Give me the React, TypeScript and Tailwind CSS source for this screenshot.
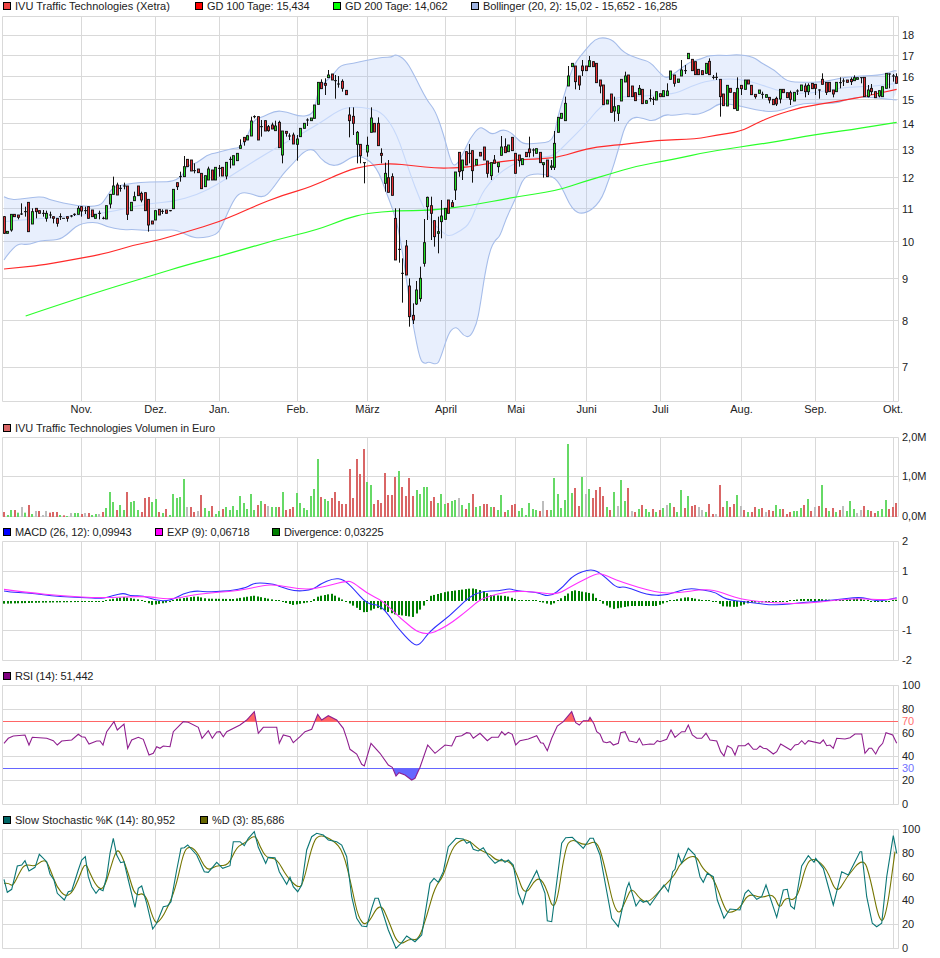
import React from "react";

// all series are stored in 3x crop coordinates, the way they were read off the chart
type Candle = [number, string, number, number, number?, number?];

const CANDLES_A: Candle[] = [
  [12,"r",650,700,648,702],[22,"g",694,700],[33,"g",643,690,643,695],[43,"r",643,650],[54,"r",645,652,645,658],[65,"k",642,643,610,645],[76,"k",635,635,620,650],[85,"r",607,695],[97,"g",635,672,625,672],[108,"r",625,635,625,655],[118,"r",632,640],[129,"k",640,640,630,650],[139,"g",640,655,632,665],[150,"k",645,645,635,655],[160,"r",650,655,650,670],[171,"r",655,670,655,680],[181,"k",650,650,640,660],[191,"k",655,655,655,655],[202,"r",650,655,650,665],[213,"k",648,648,645,652],[223,"k",643,643,640,648],[235,"g",625,643,618,643],[244,"r",620,633,618,650],[255,"k",632,632,620,642],[265,"r",620,655],[277,"r",630,650],[287,"g",643,655],[298,"k",640,640,632,658],[309,"k",655,655,650,658],[319,"g",617,657],
  [331,"g",583,612,583,625],[340,"g",558,583,530,583],[352,"r",555,585,548,585],[362,"k",565,565,555,575],[373,"k",558,558,548,568],[382,"r",558,643,558,660],[394,"g",607,632],[404,"g",590,602,575,602],[415,"r",558,587],[425,"r",580,600,575,607],[436,"r",578,632],[446,"r",598,675,598,695],[457,"r",663,672],[467,"g",632,660],[478,"r",628,645],[488,"k",634,634,628,642],[498,"r",630,640],[510,"k",632,632,630,634],[520,"g",568,626],[531,"r",548,560,548,570],[541,"k",530,530,515,545],[552,"g",500,530,468,530],[562,"r",478,500],[573,"r",480,513],[584,"k",512,512,490,520],[595,"r",507,518],[605,"r",520,566],[616,"g",527,560],[625,"g",507,540,500,540],[637,"r",510,540],[647,"g",502,540],
  [658,"k",505,505,495,530],[668,"r",502,528],[679,"g",487,528,487,538],[690,"k",478,478,470,505],[700,"g",467,495],[712,"g",460,482],[721,"g",437,445,418,445],[733,"r",412,425,412,437],[742,"g",407,420],[754,"g",363,408,350,408],[764,"k",350,350,346,355],[775,"r",350,420],[785,"k",380,380,360,410],[796,"r",362,393],[806,"r",380,392,375,395],[817,"r",375,387,368,387],[827,"g",378,392,362,392],[838,"r",367,443,362,443],[848,"g",393,465,393,490],[859,"r",394,400,394,410],[869,"k",408,408,400,420],[880,"r",405,432,398,432],[892,"g",417,433,405,482],[901,"g",385,410],[913,"g",370,385],[923,"k",360,360,355,378],[933,"g",354,362],[943,"g",315,355],[955,"g",247,313],[964,"r",247,266,238,266],[975,"r",250,256,235,285],[985,"g",225,233,210,233],
  [996,"r",222,240],[1006,"k",242,242,225,296],[1016,"k",252,252,228,263],[1027,"r",244,265,238,275],[1039,"r",271,284],[1048,"r",345,362,322,412],[1060,"r",349,370,322,405],[1071,"g",397,433,393,490],[1081,"r",433,467,433,490],[1093,"k",488,488,488,550],[1102,"g",436,456,410,470],[1114,"g",354,397,322,397],[1124,"r",370,396],[1134,"r",370,437,352,437],[1144,"r",460,466,445,490],[1156,"g",520,550,488,575],[1165,"r",533,577,480,577],[1177,"r",530,586,520,586],[1187,"r",655,780,625,780],[1198,"k",748,748,625,788],[1208,"k",820,820,775,908],[1219,"r",738,825,720,825],[1229,"r",858,950,835,980],[1240,"r",946,960,910,972],[1250,"g",870,912,843,915],[1261,"g",835,896,800,905],[1273,"g",728,790,657,800],[1283,"g",592,620,590,660],[1293,"r",617,640,590,720],[1304,"r",662,710,662,740],[1315,"g",695,700,650,760],[1325,"g",648,665,600,715],[1335,"g",625,658],[1345,"r",600,640],[1357,"r",608,620,600,620],[1366,"g",516,570,516,600],[1377,"r",457,515,457,530],[1387,"g",480,512,480,540],[1398,"r",455,495],[1408,"k",460,460,432,490],
];

// second half, x counted from the middle of the chart
const CANDLES_B: Candle[] = [
  [6,"r",452,512,452,548],[18,"g",478,495],[30,"r",457,468],[42,"r",441,480],[52,"r",483,520,483,533],[63,"g",488,527,488,540],[74,"r",480,490,465,490],[84,"g",488,500,488,518],[94,"g",441,466,408,466],[106,"r",440,458,415,458],[116,"g",435,455],[127,"r",412,452],[137,"r",460,520],[148,"r",465,482,465,500],[158,"g",476,494],[168,"r",457,470],[179,"r",447,458,410,472],[190,"k",450,450,445,470],[200,"g",446,460],[211,"r",457,488],[221,"g",488,494,488,533],[232,"r",480,530],[243,"g",498,502,480,510],[253,"g",430,502,393,510],[264,"g",352,397],[274,"g",340,355],[285,"g",310,362,290,362],[295,"g",228,258,198,258],[306,"g",190,200],[317,"r",198,245,198,268],
  [327,"r",228,255,228,270],[338,"r",198,212,180,228],[349,"r",198,212],[359,"g",182,200,168,200],[370,"r",185,200],[380,"r",190,248],[391,"r",240,258,240,280],[401,"r",255,314],[412,"g",300,312],[423,"r",282,337],[433,"g",320,333,290,365],[445,"g",317,340,317,363],[455,"g",238,303],[465,"g",228,246,215,246],[475,"r",225,290],[487,"r",258,290],[497,"r",278,302],[508,"g",265,284,255,284],[518,"r",268,311],[530,"g",302,310],[540,"k",296,296,268,305],[550,"k",298,298,290,315],[560,"g",275,300],[570,"r",281,290],[581,"g",272,290],[592,"g",273,287,250,287],[601,"g",213,238],[613,"r",225,250,225,260],[624,"g",237,247],[634,"g",210,228,180,228],
  [645,"k",212,212,195,222],[655,"g",160,176],[667,"r",178,212],[676,"r",185,224],[686,"r",208,224],[697,"r",212,224],[709,"g",190,220],[719,"r",184,224,175,224],[730,"k",232,232,225,238],[740,"k",232,232,218,240],[751,"r",238,290,238,350],[760,"r",282,317],[771,"g",256,318],[781,"r",265,277],[792,"r",278,326],[802,"g",265,331,232,331],[813,"r",256,266,256,285],[825,"g",240,268],[835,"r",240,252],[845,"r",256,284],[856,"r",283,290,283,296],[867,"g",270,280],[877,"k",283,283,275,296],[888,"g",284,292],[898,"r",292,300,292,310],[909,"r",298,314],[920,"r",295,312,290,318],[930,"g",268,297,268,310],[940,"r",268,278],[951,"r",278,293],
  [962,"r",278,298,272,315],[973,"g",277,303],[983,"k",273,273,268,285],[994,"g",255,272],[1005,"r",258,275,250,292],[1015,"g",256,275,250,285],[1027,"r",250,266],[1037,"r",253,265,253,285],[1047,"k",270,270,268,296],[1058,"r",238,253,220,253],[1069,"r",247,277,247,285],[1079,"r",247,275],[1090,"r",270,282,270,292],[1100,"g",247,275],[1111,"k",248,248,232,265],[1121,"k",243,243,235,258],[1132,"r",240,247],[1143,"r",238,245,232,255],[1153,"g",233,242,226,242],[1163,"g",233,238],[1174,"k",233,233,232,250],[1184,"r",232,290],[1195,"g",270,290,255,292],[1205,"r",265,275,252,285],[1216,"r",275,293],[1227,"g",272,288,272,292],[1237,"g",260,290],[1248,"g",220,265],[1258,"k",222,222,220,265],[1269,"k",228,228,222,245],[1279,"r",230,250,220,250],
];

const BAND_UP = [12,590,30,600,60,597,100,592,130,590,150,600,230,618,300,620,320,590,340,560,380,553,420,547,480,545,520,545,550,525,560,497,590,490,620,465,650,458,700,445,720,443,745,405,760,360,790,350,825,332,860,335,900,350,935,345,945,320,955,270,975,245,1000,225,1020,195,1060,190,1100,180,1150,172,1175,172,1187,162,1215,178,1240,220,1280,300,1305,330,1330,400,1355,495,1370,495,1390,460,1410,415,
  1438,380,1455,388,1478,405,1505,388,1530,395,1545,410,1570,433,1610,430,1660,425,1672,355,1700,260,1720,195,1760,145,1785,118,1810,112,1840,120,1870,158,1920,178,1950,185,1980,220,2000,237,2030,215,2070,185,2100,178,2130,165,2190,167,2210,163,2260,170,2285,190,2325,210,2360,245,2410,247,2470,247,2530,232,2580,228,2650,225,2680,212,2690,213];
const BAND_LOW = [12,780,25,760,55,730,85,735,120,722,175,720,200,705,235,672,290,665,320,680,365,690,400,688,440,692,500,690,530,690,570,710,600,715,650,705,665,680,700,600,720,578,745,578,790,595,815,570,850,520,880,490,910,455,940,445,960,475,990,497,1020,495,1060,467,1090,470,1130,500,1160,580,1190,660,1210,770,1225,880,1240,980,1260,1080,1275,1092,1285,1085,1310,1094,1320,1080,1345,1000,1362,982,1375,985,1390,1007,1410,1012,
  1430,972,1440,920,1455,820,1470,750,1485,720,1500,710,1520,650,1550,590,1570,530,1610,520,1660,528,1685,560,1715,628,1750,645,1800,610,1830,530,1855,450,1875,375,1900,350,1930,355,1960,365,1995,343,2020,347,2060,340,2090,345,2130,330,2160,307,2220,318,2270,330,2325,337,2370,322,2410,310,2460,310,2510,310,2540,298,2585,290,2640,295,2690,300];
const BAND_MID = [12,665,60,660,130,655,240,645,310,640,380,625,450,610,520,605,590,585,650,555,720,510,800,460,870,420,960,370,1020,328,1060,320,1110,325,1150,340,1190,400,1230,520,1260,600,1290,660,1330,700,1350,710,1385,690,1410,670,
  1440,590,1470,545,1510,510,1545,490,1610,470,1660,470,1700,430,1760,370,1800,320,1850,290,1910,290,1970,285,2030,280,2070,260,2130,240,2210,235,2270,250,2330,270,2370,280,2430,280,2490,270,2550,260,2610,260,2690,250];
const MA_100 = [12,807,80,800,130,795,240,775,320,760,400,735,480,720,560,695,660,665,760,620,850,585,930,562,1040,512,1100,497,1170,490,1240,497,1310,505,1380,503,1410,500,1470,490,1540,480,1600,477,1670,473,1730,455,1790,440,1860,435,1970,421,2090,417,2150,405,2220,395,2270,370,2320,347,2410,320,2510,305,2590,290,2690,268];
const MA_200 = [77,948,240,893,460,825,560,795,690,760,825,720,950,690,1040,655,1100,640,1190,632,1290,632,1410,617,1540,592,1670,572,1750,545,1830,522,1910,498,2010,480,2140,452,2300,430,2450,403,2550,390,2690,367];

const VOLUME = "r816 g825 g810 r810 g818 x801 g818 r795 g822 x813 r813 x825 x813 r818 r816 r816 g825 r826 g828 x819 g819 g819 r822 x819 r819 g825 g822 x822 r816 g804 g756 g786 r810 g795 g810 r756 g786 g783 g810 r816 r774 r771 g786 g777 r816 g819 r807 g825 g762 g774 g771 g717 x801 r801 r816 x813 r765 g804 g813 r798 g822 g813 r807 g801 g810 g798 g810 g768 g789 g807 g762 g810 r795 g783 r792 x798 g801 g801 r801 g756 r810 r807 r801 g759 g789 g804 g810 g768 g747 g657 r771 g777 g783 r774 r756 r783 r792 r792 r687 r774 r657 r702 r627 g726 g735 r792 r780 r789 r699 r765 r765 r711 g693 r741 r768 r714 r768 g750 g762 g741 g741 r783 r771 g789 g762 g792 r789 g783 g780 x774 g795 r807 g789 r762 g801 g798 r792 r792 g801 r801 g810 g765 r816 g810 r795 r792 g813 g804 g825 g789 g807 g810 r813 x783 r810 g810 g714 g762 g804 g780 g612 g759 r744 r798 g711 x762 g747 r774 r750 r741 r768 g801 r810 g756 x798 g720 g783 r744 x813 r816 g807 r795 g807 g816 r807 g816 r810 g804 x795 g789 r801 g816 g750 r804 g768 r798 r795 x801 x810 g816 r792 r822 x822 r735 r801 g783 r801 r792 g765 x798 r810 g816 r816 r801 g807 r804 x816 r810 r813 g795 g807 r807 r822 r816 g813 g813 g804 r795 g777 r813 x801 r798 g735 r804 g813 r804 g816 r810 x798 g813 g783 g807 x819 x810 r798 g810 r813 r819 g813 g807 g780 r807 r801 r789".split(" ");
const VOLUME_COLOR: Record<string, string> = { r: "#d96666", g: "#66d966", x: "#bdbdbd" };
const BAR_STEP = 3.526;

// divergence knots: x, height above the zero line
const DIVERGENCE = [12,-8,120,-5,300,-2,330,5,372,12,420,4,440,-4,457,-12,510,-3,530,6,590,14,620,7,700,6,762,16,830,2,880,-12,930,-3,955,14,995,22,1040,-2,1095,-36,1130,-20,1185,-40,1240,-48,1270,-15,1290,15,1340,28,1416,38,1428,36,1450,30,1470,18,1520,15,1545,6,1560,1,1610,0,1625,-3,1655,-12,1680,6,1720,33,1780,22,1790,8,1810,-8,1840,-24,1890,-15,1970,-15,2010,0,2060,12,2110,2,2150,-2,2170,-16,2210,-18,2250,-5,2360,-2,2400,6,2460,6,2510,2,2580,8,2610,-2,2650,-3,2690,4];
const MACD = [12,213,30,217,80,218,130,225,180,230,240,232,310,236,340,226,372,219,390,228,430,227,465,241,510,243,550,220,590,212,610,216,690,213,740,203,765,187,825,193,840,200,890,215,940,208,960,192,1000,175,1030,178,1060,205,1100,252,1140,255,1170,290,1190,320,1240,375,1260,375,1290,332,1350,287,1410,228,1450,213,1495,213,1530,205,1550,213,1610,216,1650,232,1690,200,1720,165,1775,145,1810,165,1850,205,1875,198,1940,225,2000,227,2060,204,2110,210,2150,218,2175,238,2240,246,2325,257,2410,247,2500,241,2580,230,2620,241,2650,243,2690,233];
const EXP = [12,208,80,217,190,228,300,234,440,228,510,240,590,222,720,212,790,196,830,194,900,208,950,206,1040,182,1060,187,1100,220,1150,243,1200,295,1270,350,1340,320,1410,265,1440,238,1490,222,1540,213,1610,216,1670,225,1720,195,1790,160,1810,163,1860,185,1970,218,2030,220,2110,208,2150,212,2220,238,2310,248,2410,252,2510,240,2580,235,2650,240,2690,236];
const RSI = [12,40,25,25,40,18,75,15,87,45,97,22,140,25,160,32,172,45,185,33,215,30,235,13,245,20,255,22,267,42,290,33,300,33,309,45,320,5,342,-25,352,0,372,-18,383,55,395,30,415,22,430,28,447,75,460,70,470,50,480,55,490,48,510,50,520,5,550,-25,565,-23,595,-8,606,25,625,2,637,25,650,6,660,5,670,20,680,5,720,-15,740,-30,763,-55,775,10,790,-8,830,-8,838,40,850,15,870,20,880,38,900,20,915,5,935,-2,953,-47,965,-30,985,-43,1010,-30,1030,-5,1040,25,1050,58,1070,72,1085,103,1093,108,1113,40,1140,70,1165,105,1177,112,1188,138,1197,128,1215,135,1235,150,1245,145,1260,112,1283,45,1305,70,1335,45,1355,48,1368,20,1385,17,1400,8,1410,10,1420,25,1440,10,1462,32,1475,22,1495,22,1505,5,1515,15,1525,7,1537,13,1547,45,1560,32,1585,27,1610,17,1622,38,1630,40,1642,62,1655,25,1672,-12,1690,-25,1715,-55,1727,-22,1738,-15,1750,-28,1765,-28,1770,-38,1782,-18,1790,5,1800,12,1810,35,1820,38,1830,35,1840,45,1855,40,1862,8,1875,5,1888,33,1900,35,1910,38,1918,25,1928,45,1950,42,1962,43,1972,32,1980,35,2000,28,2013,0,2025,22,2045,5,2055,5,2065,-15,2077,15,2090,25,2105,25,2118,10,2130,30,2150,33,2162,65,2172,78,2182,47,2195,55,2205,75,2215,47,2235,47,2245,40,2260,58,2270,58,2280,48,2290,55,2300,56,2320,72,2330,65,2342,42,2372,60,2385,45,2395,43,2405,32,2415,43,2425,32,2460,40,2470,30,2480,47,2490,45,2500,55,2510,25,2535,27,2550,23,2565,12,2585,12,2595,70,2607,55,2615,55,2627,72,2637,52,2648,40,2658,8,2678,15,2690,40];
const STOCH_K = [12,448,22,487,35,478,52,408,65,405,75,392,87,423,105,412,118,373,140,395,150,432,162,450,172,490,193,510,205,485,215,482,235,420,245,390,256,380,265,440,275,470,288,490,298,477,309,482,320,440,330,370,340,325,350,375,362,398,372,395,385,450,405,532,415,475,425,468,440,520,458,597,470,580,490,530,503,527,513,515,530,420,543,355,553,353,563,345,590,375,613,425,625,427,650,397,668,415,690,407,700,335,720,335,733,347,745,325,763,305,775,352,797,400,805,382,825,383,838,425,860,463,870,442,880,470,893,485,905,465,920,360,935,320,950,310,970,315,985,330,1010,335,1025,345,1040,380,1055,500,1070,565,1085,588,1100,590,1115,535,1125,505,1135,505,1165,600,1188,655,1205,638,1220,618,1245,635,1265,615,1290,460,1302,445,1315,457,1330,425,1345,350,1368,325,1390,327,1400,340,1410,335,1420,358,1435,363,1450,353,1465,378,1485,400,1505,388,1515,397,1525,390,1540,405,1555,490,1568,522,1580,480,1610,422,1635,490,1642,572,1655,575,1685,340,1697,323,1717,322,1750,355,1770,325,1780,325,1800,375,1835,565,1855,590,1880,475,1887,458,1908,528,1920,510,1930,517,1940,512,1950,525,1975,490,1992,465,2005,485,2018,425,2025,418,2035,373,2045,400,2065,355,2085,375,2100,440,2110,457,2122,430,2140,440,2152,510,2172,565,2190,537,2220,540,2235,490,2245,480,2270,508,2285,500,2298,465,2330,562,2350,480,2362,478,2372,528,2383,537,2405,408,2425,377,2442,397,2447,385,2470,415,2500,525,2525,425,2545,435,2580,365,2585,365,2600,500,2617,580,2630,590,2645,580,2660,440,2672,365,2680,317,2690,370];
const STOCH_D = [12,460,25,458,38,470,60,425,75,402,105,410,125,392,140,393,155,430,170,470,195,500,215,490,235,450,255,395,270,430,290,470,310,480,330,420,350,355,365,375,385,430,405,500,435,485,460,570,475,582,510,520,530,460,550,370,565,348,590,362,620,425,650,405,685,408,710,350,735,340,765,312,780,350,800,385,830,385,860,440,895,475,910,460,935,350,955,312,1000,330,1030,365,1055,470,1075,565,1100,590,1140,515,1165,570,1195,648,1230,625,1255,632,1280,560,1305,470,1330,440,1355,355,1385,327,1410,333,1440,362,1470,372,1490,393,1530,392,1550,430,1575,500,1610,440,1635,460,1665,560,1695,355,1715,325,1755,348,1790,330,1810,390,1850,570,1880,505,1895,472,1920,508,1945,520,1990,470,2025,435,2040,400,2085,370,2110,420,2140,440,2175,540,2190,550,2220,535,2245,490,2285,505,2320,490,2340,540,2355,500,2390,515,2420,395,2445,385,2480,415,2510,495,2540,440,2590,382,2610,440,2640,585,2660,550,2685,365];

const V_GRID = [81.5, 155.5, 219.5, 297.5, 367.5, 445.5, 515.5, 586.5, 660.5, 741.5, 815.5, 893.5];
const MONTHS: [string, number][] = [["Nov.",81.5],["Dez.",155.5],["Jan.",219.5],["Feb.",297.5],["März",367.5],["April",446],["Mai",516],["Juni",586.5],["Juli",660.5],["Aug.",741.5],["Sep.",815.5],["Okt.",893]];
const GRID_COLOR = "#d9d9d9";

function toPoints(flat: number[], y0: number) {
  const out: string[] = [];
  for (let i = 0; i < flat.length; i += 2) {
    out.push(`${(flat[i] / 3).toFixed(1)},${(y0 + flat[i + 1] / 3).toFixed(1)}`);
  }
  return out;
}

// rounds the corners between the knots, for the lines that are smooth in the chart
function smoothPath(flat: number[], y0: number) {
  const xy = (i: number): [number, number] => [flat[i] / 3, y0 + flat[i + 1] / 3];
  let d = `M${xy(0).join(" ")}`;
  for (let i = 2; i < flat.length - 2; i += 2) {
    const [x, y] = xy(i);
    const [nx, ny] = xy(i + 2);
    d += `Q${x.toFixed(1)} ${y.toFixed(1)} ${((x + nx) / 2).toFixed(1)} ${((y + ny) / 2).toFixed(1)}`;
  }
  return d + `L${xy(flat.length - 2).join(" ")}`;
}

function reversePairs(flat: number[]) {
  const out: number[] = [];
  for (let i = flat.length - 2; i >= 0; i -= 2) out.push(flat[i], flat[i + 1]);
  return out;
}

function interpolate(flat: number[], x: number) {
  for (let i = 0; i < flat.length - 2; i += 2) {
    if (x <= flat[i + 2]) {
      const t = Math.max(0, (x - flat[i]) / (flat[i + 2] - flat[i]));
      return flat[i + 1] + t * (flat[i + 3] - flat[i + 1]);
    }
  }
  return flat[flat.length - 1];
}

function Swatch({ color }: { color: string }) {
  return <span className="block w-[8px] h-[8px] shrink-0 border border-black" style={{ backgroundColor: color }} />;
}

// color, label, item width + tracking classes
function LegendRow({ items, className }: { items: [string, string, string][]; className: string }) {
  return (
    <div className={`flex items-center h-[12px] pl-[3px] text-[11px] leading-none text-[#222] whitespace-nowrap ${className}`}>
      {items.map(([color, label, itemClass]) => (
        <div key={label} className={`flex items-center gap-[4px] shrink-0 ${itemClass}`}>
          <Swatch color={color} />
          <span>{label}</span>
        </div>
      ))}
    </div>
  );
}

function Panel({ top, height, hLines, labels, children }: {
  top: number;
  height: number;
  hLines: number[];
  labels: [string, number, string?][];
  children: React.ReactNode;
}) {
  const first = hLines[0];
  const last = hLines[hLines.length - 1];
  return (
    <svg className="block w-[940px] shrink-0" height={height} viewBox={`0 ${top} 940 ${height}`}>
      {hLines.map((y) => (
        <line key={y} x1={2.5} x2={898.5} y1={y} y2={y} stroke={GRID_COLOR} />
      ))}
      {[2.5, ...V_GRID, 898.5].map((x) => (
        <line key={x} x1={x} x2={x} y1={first} y2={last} stroke={GRID_COLOR} />
      ))}
      {children}
      {labels.map(([text, y, fill]) => (
        <text key={text} x={902} y={y + 4} fontSize={11} fill={fill ?? "#222"}>{text}</text>
      ))}
    </svg>
  );
}

function CandleMark({ c, dx }: { c: Candle; dx: number }) {
  const [zx, kind, t, b, h, l] = c;
  const x = Math.round((zx + dx) / 3 - 0.5) + 0.5;
  const fill = kind === "g" ? "#22dd22" : "#e62e33";
  return (
    <g>
      <line x1={x} x2={x} y1={(h ?? t) / 3} y2={(l ?? b) / 3} stroke="#111" />
      {kind === "k" ? (
        <line x1={x - 1.5} x2={x + 1.5} y1={t / 3} y2={t / 3} stroke="#111" />
      ) : (
        <rect x={x - 1} y={t / 3} width={2} height={Math.max(1, (b - t) / 3)} fill={fill} stroke="#111" strokeWidth={0.9} />
      )}
    </g>
  );
}

function MainChart() {
  return (
    <Panel
      top={12}
      height={408}
      hLines={[16.5, 35.5, 55.5, 76.5, 99.5, 123.5, 149.5, 177.5, 208.5, 241.5, 278.5, 320.5, 367.5, 401.5]}
      labels={[["18",35],["17",55.5],["16",76.5],["15",99.5],["14",123.5],["13",149.5],["12",177.5],["11",208.5],["10",241.5],["9",278.5],["8",320.5],["7",367]]}
    >
      <path d={smoothPath([...BAND_UP, ...reversePairs(BAND_LOW)], 0) + "Z"} fill="#a0bef5" fillOpacity={0.24} />
      <path d={smoothPath(BAND_MID, 0)} fill="none" stroke="#c6d8fa" strokeWidth={1.1} />
      <path d={smoothPath(BAND_UP, 0)} fill="none" stroke="#a6bdea" strokeWidth={1.1} />
      <path d={smoothPath(BAND_LOW, 0)} fill="none" stroke="#a6bdea" strokeWidth={1.1} />
      <path d={smoothPath(MA_100, 0)} fill="none" stroke="#ff2a2a" strokeWidth={1.2} />
      <path d={smoothPath(MA_200, 0)} fill="none" stroke="#2aff2a" strokeWidth={1.2} />
      {CANDLES_A.map((c) => <CandleMark key={c[0]} c={c} dx={0} />)}
      {CANDLES_B.map((c) => <CandleMark key={c[0]} c={c} dx={1410} />)}
      {MONTHS.map(([m, x]) => (
        <text key={m} x={x} y={413} fontSize={11} textAnchor="middle" fill="#222">{m}</text>
      ))}
    </Panel>
  );
}

function VolumeChart() {
  return (
    <Panel
      top={432}
      height={92}
      hLines={[437.5, 476.5, 516.5]}
      labels={[["2,0M",437],["1,0M",476],["0,0M",516]]}
    >
      {VOLUME.map((v, i) => {
        const y = 240 + Number(v.slice(1)) / 3;
        return <rect key={i} x={Math.round(3 + i * BAR_STEP)} y={y} width={2} height={517 - y} fill={VOLUME_COLOR[v[0]]} />;
      })}
    </Panel>
  );
}

function MacdChart() {
  return (
    <Panel
      top={536}
      height={132}
      hLines={[541.5, 571.5, 630.5, 660.5]}
      labels={[["2",541],["1",571],["0",600],["-1",630],["-2",660]]}
    >
      {VOLUME.map((_, i) => {
        const v = interpolate(DIVERGENCE, 12 + i * BAR_STEP * 3) / 3;
        const h = Math.max(1, Math.abs(v));
        return <rect key={i} x={Math.round(3 + i * BAR_STEP)} y={v > 0 ? 601 - h : 601} width={2} height={h} fill="#007f00" />;
      })}
      <path d={smoothPath(MACD, 520)} fill="none" stroke="#2f2fff" strokeWidth={1.1} />
      <path d={smoothPath(EXP, 520)} fill="none" stroke="#ff2fff" strokeWidth={1.1} />
    </Panel>
  );
}

function RsiChart() {
  const pts = toPoints(RSI, 730);
  const firstX = RSI[0] / 3;
  const lastX = RSI[RSI.length - 2] / 3;
  return (
    <Panel
      top={680}
      height={132}
      hLines={[685.5, 709.5, 733.5, 756.5, 780.5, 804.5]}
      labels={[["100",685],["80",709],["70",721,"#ff7070"],["60",733],["40",756],["30",768,"#7070ff"],["20",780],["0",804]]}
    >
      <defs>
        <clipPath id="rsi-high"><rect x={0} y={684} width={900} height={37.5} /></clipPath>
        <clipPath id="rsi-low"><rect x={0} y={768.5} width={900} height={40} /></clipPath>
      </defs>
      <polygon clipPath="url(#rsi-high)" points={`${firstX},721.5 ${pts.join(" ")} ${lastX},721.5`} fill="#ff6666" />
      <polygon clipPath="url(#rsi-low)" points={`${firstX},768.5 ${pts.join(" ")} ${lastX},768.5`} fill="#6666ff" />
      <line x1={3} x2={898} y1={721.5} y2={721.5} stroke="#ff6666" />
      <line x1={3} x2={898} y1={768.5} y2={768.5} stroke="#6666ff" />
      <polyline points={pts.join(" ")} fill="none" stroke="#8f1f8f" strokeWidth={1.1} />
    </Panel>
  );
}

function StochChart() {
  return (
    <Panel
      top={824}
      height={134}
      hLines={[829.5, 853.5, 877.5, 900.5, 924.5, 948.5]}
      labels={[["100",829],["80",853],["60",877],["40",900],["20",924],["0",948]]}
    >
      <path d={smoothPath(STOCH_D, 730)} fill="none" stroke="#757500" strokeWidth={1.1} />
      <polyline points={toPoints(STOCH_K, 730).join(" ")} fill="none" stroke="#0b7676" strokeWidth={1.1} />
    </Panel>
  );
}

export default function App() {
  return (
    <div className="flex flex-col w-[940px] h-[958px] bg-white overflow-hidden font-['Liberation_Sans',Arial,sans-serif]">
      <LegendRow
        className=""
        items={[
          ["#ee4444", "IVU Traffic Technologies (Xetra)", "w-[192px]"],
          ["#ff0000", "GD 100 Tage: 15,434", "w-[138px] tracking-[-0.1px]"],
          ["#00ff00", "GD 200 Tage: 14,062", "w-[138px] tracking-[-0.1px]"],
          ["#9db2e0", "Bollinger (20, 2): 15,02 - 15,652 - 16,285", "tracking-[-0.09px]"],
        ]}
      />
      <MainChart />
      <LegendRow className="pt-[4px]" items={[["#d96666", "IVU Traffic Technologies Volumen in Euro", "tracking-[-0.05px]"]]} />
      <VolumeChart />
      <LegendRow
        className="pt-[4px]"
        items={[
          ["#0000ff", "MACD (26, 12): 0,09943", "w-[152px] tracking-[-0.13px]"],
          ["#ff00ff", "EXP (9): 0,06718", "w-[117px] tracking-[-0.1px]"],
          ["#007f00", "Divergence: 0,03225", "tracking-[-0.1px]"],
        ]}
      />
      <MacdChart />
      <LegendRow className="pt-[4px]" items={[["#800080", "RSI (14): 51,442", "tracking-[-0.15px]"]]} />
      <RsiChart />
      <LegendRow
        className="pt-[4px]"
        items={[
          ["#006666", "Slow Stochastic %K (14): 80,952", "w-[197px]"],
          ["#666600", "%D (3): 85,686", "tracking-[-0.13px]"],
        ]}
      />
      <StochChart />
    </div>
  );
}
